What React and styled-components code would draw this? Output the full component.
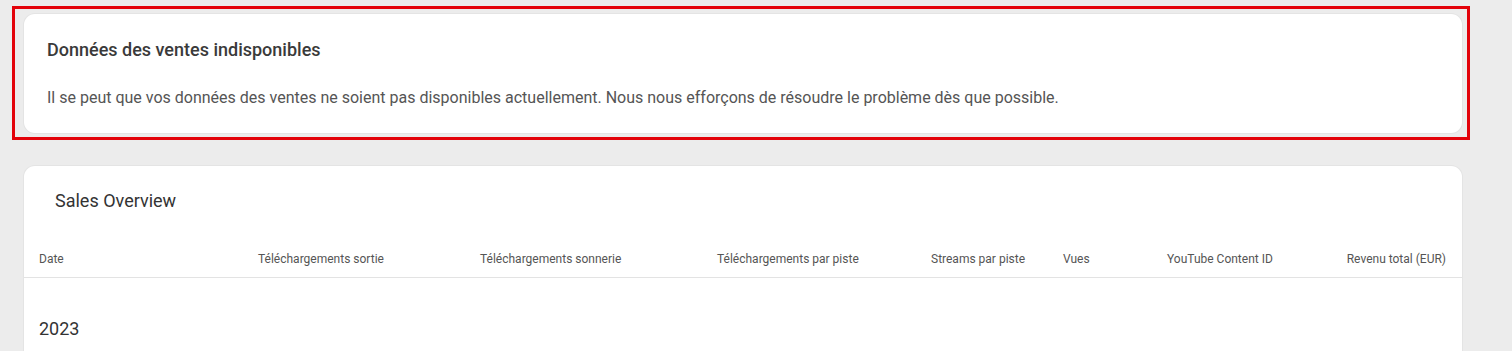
import React from 'react';
import styled, { createGlobalStyle } from 'styled-components';

const GlobalStyle = createGlobalStyle`
    body {
        margin: 0;
        background: #ececec;
        font-family: Roboto, "Liberation Sans", sans-serif;
    }
`;

const Page = styled.div`
    padding: 6px 0 0 12px;
    height: 351px;
    box-sizing: border-box;
    overflow: hidden;
`;

const Highlight = styled.div`
    width: 1458px;
    box-sizing: border-box;
    border: 3px solid #e3020a;
    padding: 5px 5px 4px 9px;
`;

const Card = styled.div`
    width: 1438px;
    box-sizing: border-box;
    background: #fff;
    border-radius: 11px;
    box-shadow: 0 0 0 1px #e4e4e4;
    margin-left: ${props => props.offset || 0}px;
    margin-top: ${props => props.top || 0}px;
`;

const Notice = styled(Card)`
    padding: 23px 23px 23px;
`;

const NoticeTitle = styled.h2`
    margin: 0;
    font-size: 18px;
    font-weight: 500;
    line-height: 26px;
    color: #3a3a3a;
`;

const NoticeText = styled.p`
    margin: 23px 0 0;
    font-size: 16px;
    line-height: 24px;
    color: #555;
`;

const Overview = styled(Card)`
    min-height: 240px;
`;

const SectionTitle = styled.h2`
    margin: 0;
    padding: 23px 31px 0;
    font-size: 18px;
    font-weight: 400;
    line-height: 24px;
    color: #333;
`;

const HeaderRow = styled.div`
    display: grid;
    grid-template-columns: 219px 222px 237px 214px 132px 104px 140px 1fr;
    align-items: center;
    height: 36px;
    margin-top: 28px;
    padding: 0 16px 0 15px;
    border-bottom: 1px solid #e3e3e3;
`;

const HeaderCell = styled.div`
    font-size: 12px;
    color: #555;
    white-space: nowrap;
    text-align: ${props => props.right ? 'right' : 'left'};
`;

const Year = styled.div`
    padding: 39px 15px 0;
    font-size: 18px;
    line-height: 24px;
    color: #333;
`;

const columns = [
    'Date',
    'Téléchargements sortie',
    'Téléchargements sonnerie',
    'Téléchargements par piste',
    'Streams par piste',
    'Vues',
    'YouTube Content ID',
    'Revenu total (EUR)',
];

const App = () => {
    return (
        <>
            <GlobalStyle />
            <Page>
                <Highlight>
                    <Notice>
                        <NoticeTitle>Données des ventes indisponibles</NoticeTitle>
                        <NoticeText>
                            Il se peut que vos données des ventes ne soient pas disponibles actuellement. Nous nous efforçons de résoudre le problème dès que possible.
                        </NoticeText>
                    </Notice>
                </Highlight>
                <Overview offset={12} top={26}>
                    <SectionTitle>Sales Overview</SectionTitle>
                    <HeaderRow>
                        {columns.map((col, i) => (
                            <HeaderCell key={col} right={i === columns.length - 1}>{col}</HeaderCell>
                        ))}
                    </HeaderRow>
                    <Year>2023</Year>
                </Overview>
            </Page>
        </>
    );
};

export default App;
